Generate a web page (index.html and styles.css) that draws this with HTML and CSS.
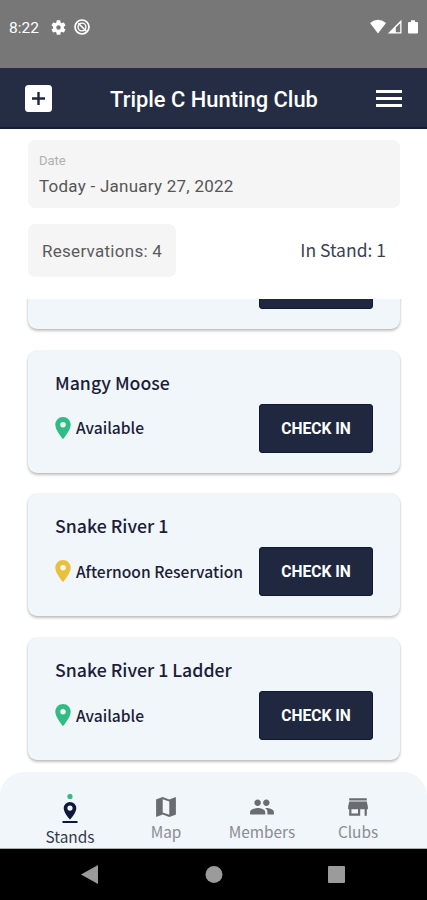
FILE: index.html
```html
<!DOCTYPE html>
<html lang="en">
<head>
<meta charset="utf-8">
<meta name="viewport" content="width=device-width, initial-scale=1">
<title>Triple C Hunting Club</title>
<link rel="stylesheet" href="styles.css">
</head>
<body>
<svg width="0" height="0" class="defs" aria-hidden="true">
  <symbol id="pin" viewBox="5 2 14 20"><path d="M12 2C8.13 2 5 5.13 5 9c0 5.25 7 13 7 13s7-7.75 7-13c0-3.87-3.13-7-7-7zm0 9.500a2.500 2.500 0 0 1 0-5 2.500 2.500 0 0 1 0 5z"/></symbol>
</svg>
<div class="phone">
  <div class="status">
    <span class="clock">8:22</span>
    <svg class="gear" viewBox="2 2 20 20"><path d="M19.140 12.940c.040-.300.060-.610.060-.940 0-.320-.020-.640-.070-.940l2.030-1.580a.49.49 0 0 0 .120-.610l-1.920-3.320a.488.488 0 0 0-.590-.220l-2.390.960c-.500-.380-1.030-.700-1.620-.940l-.360-2.540a.484.484 0 0 0-.480-.410h-3.840c-.240 0-.430.170-.470.410l-.360 2.540c-.590.240-1.130.570-1.620.940l-2.390-.960c-.220-.080-.470 0-.590.220L2.740 8.870c-.120.210-.080.470.120.610l2.030 1.580c-.050.300-.090.630-.090.940s.020.640.070.940l-2.030 1.580a.49.49 0 0 0-.120.610l1.920 3.320c.120.220.370.290.590.220l2.390-.960c.500.380 1.030.700 1.620.940l.360 2.540c.050.240.240.410.480.410h3.840c.240 0 .440-.170.470-.410l.360-2.540c.590-.240 1.130-.560 1.620-.940l2.390.960c.220.080.470 0 .590-.220l1.920-3.320c.120-.220.070-.470-.120-.610l-2.010-1.580zM12 15a3 3 0 1 1 0-6 3 3 0 0 1 0 6z"/></svg>
    <svg class="blocked" viewBox="0 0 16 16"><g fill="none" stroke="#fff"><circle cx="8" cy="8" r="7" stroke-width="1.700"/><circle cx="8" cy="8" r="3.900" stroke-width="1.400"/><path d="M4.300 4.300l8 8" stroke-width="1.600"/></g></svg>
    <svg class="signals" viewBox="0 0 50 16"><path d="M0 4Q8 -2.500 16 4L8 14.500z"/><path d="M31.500 .8v13.700H17.800z"/><path class="hole" d="M30.200 4.200v9h-4.400V8.600z"/><path d="M39 3h2V1.200h4V3h2a1 1 0 0 1 1 1v9.500a1 1 0 0 1-1 1h-8a1 1 0 0 1-1-1V4a1 1 0 0 1 1-1z"/></svg>
  </div>
  <header class="header">
    <svg class="add" viewBox="0 0 27 27"><rect width="27" height="27" rx="3.500" fill="#fff"/><path d="M13.500 7v13M7 13.500h13" stroke="#1f2841" stroke-width="2.400"/></svg>
    <h1>Triple C Hunting Club</h1>
    <div class="menu"><i></i><i></i><i></i></div>
  </header>
  <section class="summary">
    <div class="date"><span class="label">Date</span><span class="value">Today - January 27, 2022</span></div>
    <div class="counts">
      <span class="reservations">Reservations: 4</span>
      <span class="in-stand">In Stand: 1</span>
    </div>
  </section>
  <main class="list">
    <article class="card">
      <div class="info"></div>
      <button></button>
    </article>
    <article class="card">
      <div class="info"><h2>Mangy Moose</h2><p class="available"><svg><use href="#pin"/></svg><span>Available</span></p></div>
      <button>CHECK IN</button>
    </article>
    <article class="card">
      <div class="info"><h2>Snake River 1</h2><p class="reserved"><svg><use href="#pin"/></svg><span>Afternoon Reservation</span></p></div>
      <button>CHECK IN</button>
    </article>
    <article class="card">
      <div class="info"><h2>Snake River 1 Ladder</h2><p class="available"><svg><use href="#pin"/></svg><span>Available</span></p></div>
      <button>CHECK IN</button>
    </article>
  </main>
  <nav class="tabs">
    <a class="tab active"><svg viewBox="0 0 16 30"><circle cx="8" cy="2.500" r="2.600" fill="#2fbd84"/><path d="M8 8a6.300 6.300 0 0 0-6.300 6.200C1.700 19 8 25.600 8 25.600s6.300-6.600 6.300-11.400A6.300 6.300 0 0 0 8 8zm0 8.700a2.600 2.600 0 1 1 0-5.200 2.600 2.600 0 0 1 0 5.200z"/><path d="M.5 27h15v2H.5z"/></svg><span>Stands</span></a>
    <a class="tab"><svg viewBox="2 2 20 20"><path d="M20.500 3l-.160.030L15 5.100 9 3 3.360 4.900c-.210.070-.360.250-.360.480V20.500c0 .280.220.500.500.500l.160-.030L9 18.900l6 2.100 5.640-1.900c.210-.070.360-.250.360-.480V3.500c0-.280-.220-.500-.500-.500zM15 19l-6-2.110V5l6 2.110V19z"/></svg><span>Map</span></a>
    <a class="tab members"><svg viewBox="0 2 24 20"><path d="M16 11c1.660 0 2.990-1.340 2.990-3S17.660 5 16 5s-3 1.340-3 3 1.340 3 3 3zm-8 0c1.660 0 2.990-1.340 2.990-3S9.660 5 8 5 5 6.340 5 8s1.340 3 3 3zm0 2c-2.330 0-7 1.170-7 3.500V19h14v-2.500c0-2.330-4.670-3.500-7-3.500zm8 0c-.290 0-.620.020-.970.050C16.190 13.890 17 15.020 17 16.500V19h6v-2.500c0-2.330-4.670-3.500-7-3.500z"/></svg><span>Members</span></a>
    <a class="tab"><svg viewBox="2 2 20 20"><path d="M4 4h16v2H4zM20 7H4l-1 5v2h1v6h10v-6h4v6h2v-6h1v-2zm-8 11H6v-4h6z"/></svg><span>Clubs</span></a>
  </nav>
  <div class="system">
    <svg viewBox="0 0 427 51"><path d="M81 25.500L98 16v19z"/><circle cx="214" cy="25.500" r="8.500"/><rect x="328" y="17" width="17" height="17" rx="1"/></svg>
  </div>
</div>
</body>
</html>
```
FILE: styles.css
```css
* { box-sizing: border-box; }
body { margin: 0; background: #fff; font-family: Roboto, sans-serif; }
h1, h2, p { margin: 0; }
.defs { display: block; }
.phone { display: flex; flex-direction: column; width: 427px; height: 900px; overflow: hidden; }
.status { flex: none; display: flex; align-items: flex-start; height: 68px; padding: 18px 7px 0 9px; background: #777; color: #fff; fill: #fff; }
.clock { width: 42px; font-size: 15.500px; line-height: 21px; }
.gear { width: 15px; height: 15px; margin-top: 2px; }
.blocked { width: 16px; height: 16px; margin: 1px 0 0 8px; }
.signals { width: 50px; height: 16px; margin: 1px 0 0 auto; }
.signals .hole { fill: #777; }
.header { flex: none; display: flex; align-items: center; height: 61px; padding: 1px 25px 0; background: #242d44; border-bottom: 2px solid #141b35; color: #fff; }
.add { width: 27px; height: 27px; }
.header h1 { flex: 1; text-align: center; font-size: 21.900px; line-height: 28px; font-weight: 500; white-space: nowrap; padding-top: 4px; }
.menu { display: grid; gap: 4px; width: 26px; }
.menu i { height: 3px; background: #fff; }
.summary { flex: none; height: 170px; padding: 11px 27px 0 28px; }
.date { display: flex; flex-direction: column; height: 68px; padding: 12px 11px; border-radius: 7px; background: #f5f5f5; }
.label { font-size: 13px; line-height: 18px; color: #b0b0b0; }
.value { margin-top: 6px; font-size: 17px; line-height: 20px; letter-spacing: .25px; color: #565656; }
.counts { display: flex; justify-content: space-between; align-items: center; height: 53px; margin-top: 16px; padding-right: 14px; }
.reservations { width: 148px; height: 53px; padding-left: 14px; border-radius: 7px; background: #f5f5f5; font-size: 17px; line-height: 54px; letter-spacing: .28px; color: #5b5b5b; white-space: nowrap; }
.in-stand { margin-top: -2px; font: 17.500px/24px "Noto Sans CJK SC", sans-serif; color: #3b4054; }
.list { flex: none; height: 473px; padding: 0 27px 0 28px; overflow: hidden; }
.card { display: flex; justify-content: space-between; height: 122px; margin-bottom: 21.700px; padding: 0 27px; border-radius: 9px; background: #f1f6fa; box-shadow: 0 2px 3px rgba(0,0,0,.24), 0 0 2px rgba(0,0,0,.12); }
.card:first-child { margin-top: -92px; }
.info { flex: 1; font-family: "Noto Sans CJK SC", sans-serif; font-weight: 500; color: #1b2038; white-space: nowrap; }
.card h2 { margin-top: 18px; font-size: 17.700px; line-height: 26px; font-weight: 500; }
.card p { display: flex; align-items: center; height: 24px; margin-top: 21px; font-size: 15.600px; line-height: 24px; }
.card p svg { width: 16px; height: 22px; margin-right: 5px; }
.card p span { margin-top: -1px; }
.available { fill: #30bc83; }
.reserved { fill: #e9c03c; }
.card button { flex: none; width: 114px; height: 49px; margin: 53px 0 0; padding: 1px 0 0; border: 1px solid #121938; border-radius: 3px; background: #20283f; color: #fff; font: 700 15.600px/46px Roboto, sans-serif; }
.tabs { flex: none; display: grid; grid-template-columns: repeat(4, 96px); justify-content: center; height: 77px; border-bottom: 1px solid #aaafb2; border-radius: 24px 24px 0 0; background: #f1f6fa; font: 15.400px/22px "Noto Sans CJK SC", sans-serif; color: #898c90; fill: #696c70; }
.tab { display: flex; flex-direction: column; align-items: center; padding-left: 1px; padding-top: 24px; }
.tab svg { width: 22px; height: 22px; }
.tab span { margin-top: 2px; }
.tab.members svg { width: 26px; }
.tab.active { padding-top: 22px; color: #35394f; fill: #11173a; }
.tab.active svg { width: 16px; height: 30px; }
.tab.active span { margin-top: 1px; }
.system { flex: none; height: 51px; background: #000; fill: #9b9b9b; }
.system svg { display: block; width: 427px; height: 51px; }
```
